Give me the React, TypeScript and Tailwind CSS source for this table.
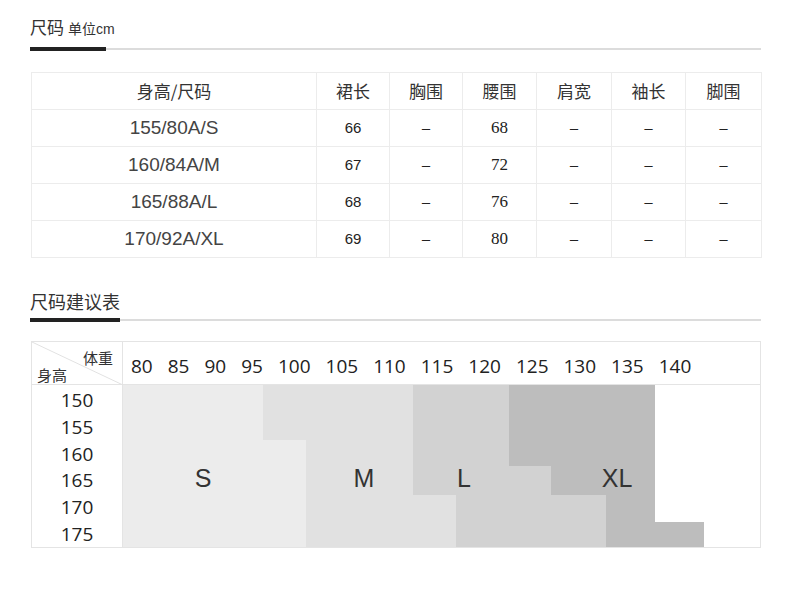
import React from 'react';

const cjk = { fontFamily: '"Noto Sans CJK SC", "Noto Sans", sans-serif' };
const arial = { fontFamily: '"Liberation Sans", Arial, "Noto Sans CJK SC", sans-serif' };
const serif = { fontFamily: '"Liberation Serif", "Times New Roman", serif' };
const open = { fontFamily: '"Open Sans", "Noto Sans", "Noto Sans CJK SC", sans-serif' };

const headers = ['身高/尺码', '裙长', '胸围', '腰围', '肩宽', '袖长', '脚围'];
const colW = ['w-[285px]', 'w-[73px]', 'w-[73px]', 'w-[74px]', 'w-[75px]', 'w-[74px]', 'w-[76px]'];

const rows = [
  ['155/80A/S', '66', '68'],
  ['160/84A/M', '67', '72'],
  ['165/88A/L', '68', '76'],
  ['170/92A/XL', '69', '80'],
];

const weights = ['80', '85', '90', '95', '100', '105', '110', '115', '120', '125', '130', '135', '140'];
const heights = ['150', '155', '160', '165', '170', '175'];

function Rule({ bar }: { bar: string }) {
  return (
    <div className="flex items-center w-[731px]">
      <div className={`h-[4px] bg-[#222] ${bar}`} />
      <div className="flex-1 h-[2px] bg-[#dcdcdc]" />
    </div>
  );
}

export default function App() {
  return (
    <div className="w-[790px] h-[596px] bg-white pl-[30px] pt-[17px] text-[#333] overflow-hidden">
      <div className="leading-[20px] whitespace-nowrap">
        <span className="text-[17px]" style={cjk}>尺码</span>
        <span className="text-[14px] ml-[4px]" style={cjk}>单位</span>
        <span className="text-[14px]" style={arial}>cm</span>
      </div>
      <div className="mt-[8px]">
        <Rule bar="w-[76px]" />
      </div>

      <table className="mt-[21px] ml-px border-collapse w-[730px] table-fixed">
        <thead>
          <tr>
            {headers.map((h, i) => (
              <th key={h} className={`${colW[i]} h-[37px] p-0 border border-[#ececec] font-normal text-[17px] text-[#333]`} style={cjk}>
                {h}
              </th>
            ))}
          </tr>
        </thead>
        <tbody>
          {rows.map((r) => (
            <tr key={r[0]}>
              <td className="h-[37px] p-0 border border-[#ececec] text-center text-[19px] text-[#444]" style={arial}>{r[0]}</td>
              <td className="p-0 border border-[#ececec] text-center text-[15px] text-[#222]" style={arial}>{r[1]}</td>
              <td className="p-0 border border-[#ececec] text-center text-[16px] text-[#222]" style={serif}>–</td>
              <td className="p-0 border border-[#ececec] text-center text-[17px] text-[#222]" style={serif}>{r[2]}</td>
              <td className="p-0 border border-[#ececec] text-center text-[16px] text-[#222]" style={serif}>–</td>
              <td className="p-0 border border-[#ececec] text-center text-[16px] text-[#222]" style={serif}>–</td>
              <td className="p-0 border border-[#ececec] text-center text-[16px] text-[#222]" style={serif}>–</td>
            </tr>
          ))}
        </tbody>
      </table>

      <div className="mt-[32px] leading-[22px] text-[18px] whitespace-nowrap" style={cjk}>尺码建议表</div>
      <div className="mt-[6px]">
        <Rule bar="w-[90px]" />
      </div>

      <div className="mt-[19px] ml-px w-[730px] border border-[#e4e4e4]">
        <div className="flex h-[43px] border-b border-[#e4e4e4]">
          <div className="relative w-[91px] border-r border-[#e4e4e4] flex flex-col text-[15px] leading-[18px]" style={cjk}>
            <svg className="absolute inset-0" width="91" height="43">
              <line x1="0" y1="0" x2="91" y2="43" stroke="#e2e2e2" strokeWidth="1" />
            </svg>
            <span className="relative self-end pr-[9px] pt-[7px]">体重</span>
            <span className="relative pl-[5px] -mt-[1px]">身高</span>
          </div>
          <div className="flex items-center gap-[15px] pl-[8px] pt-[6px] text-[19px] text-[#222]" style={open}>
            {weights.map((w) => (
              <span key={w}>{w}</span>
            ))}
          </div>
        </div>
        <div className="flex">
          <div className="w-[91px] border-r border-[#e4e4e4] pt-[2px] text-[19px] text-[#222]" style={open}>
            {heights.map((h) => (
              <div key={h} className="h-[27px] -mb-[0.34px] flex items-center justify-center">{h}</div>
            ))}
          </div>
          <svg width="637" height="162" className="block">
            <polygon points="0,0 140,0 140,55 183,55 183,162 0,162" fill="#ececec" />
            <polygon points="140,0 290,0 290,110 333,110 333,162 183,162 183,55 140,55" fill="#e1e1e1" />
            <polygon points="290,0 386,0 386,81 428,81 428,110 483,110 483,162 333,162 333,110 290,110" fill="#d2d2d2" />
            <polygon points="386,0 532,0 532,137 581,137 581,162 483,162 483,110 428,110 428,81 386,81" fill="#bdbdbd" />
            <g fontFamily="Liberation Sans, Arial, sans-serif" fontSize="25" fill="#333" textAnchor="middle">
              <text x="80" y="102">S</text>
              <text x="241" y="102">M</text>
              <text x="341" y="102">L</text>
              <text x="494" y="102">XL</text>
            </g>
          </svg>
        </div>
      </div>
    </div>
  );
}
